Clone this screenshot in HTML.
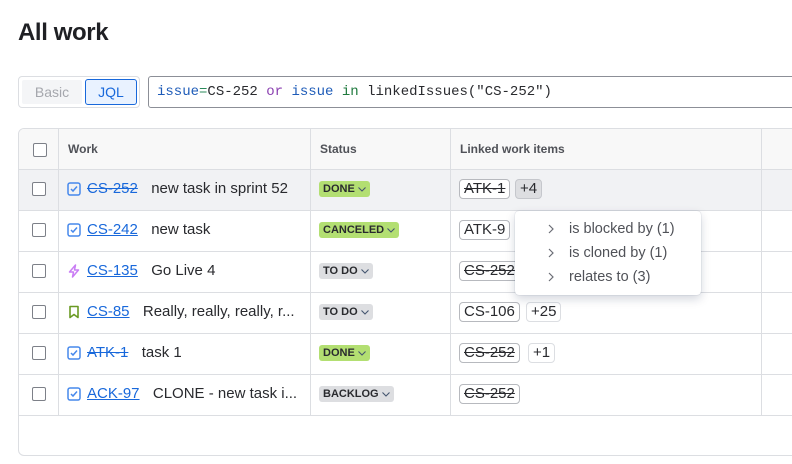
<!DOCTYPE html>
<html><head><style>
*{box-sizing:border-box;margin:0;padding:0}
body{width:792px;height:464px;overflow:hidden;background:#fff;font-family:"Liberation Sans",sans-serif;color:#292a2e;position:relative}
.abs{position:absolute}
h1{position:absolute;left:18px;top:19px;font-size:24px;font-weight:bold;color:#1f2024;letter-spacing:-0.4px}
.tog{left:18px;top:76px;width:122px;height:32px;border:1px solid #dcdee2;border-radius:4px;background:#fff}
.basic{left:22px;top:80px;width:60px;height:24px;background:#f4f5f7;color:#a5a7ad;font-size:14px;line-height:24px;text-align:center;border-radius:2px}
.jql{left:85px;top:79px;width:52px;height:26px;background:#e9f2ff;border:1px solid #1868db;color:#1868db;font-size:14px;line-height:24px;text-align:center;border-radius:3px}
.q{left:148px;top:76px;width:660px;height:32px;border:1px solid #8c8f97;border-radius:3px;font-family:"Liberation Mono",monospace;font-size:14px;line-height:30px;padding-left:8px;color:#292a2e}
.kw{color:#1d5bb8}.op{color:#2a8a5a}.pu{color:#8a3fb0}.gr{color:#1f7a3e}
.tbl{left:18px;top:128px;width:800px;height:328px;border:1px solid #dcdee2;border-radius:6px;overflow:hidden}
.hdr{left:0;top:0;width:800px;height:41px;background:#f8f8f8;border-bottom:1px solid #dcdee2}
.vl{top:0;width:1px;background:#dcdee2;height:286px}
.row{left:0;width:800px;height:41px;border-bottom:1px solid #dcdee2}
.th{top:13px;font-size:12px;font-weight:bold;color:#505258}
.cb{width:14px;height:14px;border:1.5px solid #7d8088;border-radius:2px;background:#fff}
.lnk{font-size:15px;color:#1868db;text-decoration:underline}
.st{text-decoration:line-through;text-decoration-color:currentColor}
.sum{font-size:15px;color:#292a2e}
.pill{height:16px;border-radius:3px;font-size:11px;font-weight:bold;line-height:16px;padding:0 3px 0 4px;color:#292a2e;white-space:nowrap;display:flex;align-items:center;gap:2px}
.pill svg{display:block}
.g{background:#b3df72}.n{background:#dddee1}
.chip{height:20px;border:1px solid #b7b9be;border-radius:4px;font-size:15px;line-height:18px;padding:0 4px;color:#292a2e;background:#fff}
.plus{border-color:#dcdee2}
.pop{left:515px;top:211px;width:186px;height:84px;background:#fff;border-radius:4px;box-shadow:0 4px 10px rgba(9,30,66,.18),0 0 1px rgba(9,30,66,.3)}
.pi{left:54px;font-size:14.5px;color:#505258}
.ch{left:32px}
</style></head><body>
<h1>All work</h1>
<div class="abs tog"></div>
<div class="abs basic">Basic</div>
<div class="abs jql">JQL</div>
<div class="abs q"><span class="kw">issue</span><span class="op">=</span>CS-252 <span class="pu">or</span> <span class="kw">issue</span> <span class="gr">in</span> linkedIssues("CS-252")</div>

<div class="abs tbl">
 <div class="abs hdr"></div>
 <div class="abs row" style="top:41px;background:#f1f2f4"></div>
 <div class="abs row" style="top:82px"></div>
 <div class="abs row" style="top:123px"></div>
 <div class="abs row" style="top:164px"></div>
 <div class="abs row" style="top:205px"></div>
 <div class="abs row" style="top:246px"></div>
 <div class="abs vl" style="left:39px"></div>
 <div class="abs vl" style="left:291px"></div>
 <div class="abs vl" style="left:431px"></div>
 <div class="abs vl" style="left:742px"></div>
 <div class="abs cb" style="left:14px;top:14px"></div>
 <div class="abs th" style="left:49px">Work</div>
 <div class="abs th" style="left:301px">Status</div>
 <div class="abs th" style="left:441px">Linked work items</div>
</div>

<div class="abs cb" style="left:32px;top:182px"></div>
<div class="abs cb" style="left:32px;top:223px"></div>
<div class="abs cb" style="left:32px;top:264px"></div>
<div class="abs cb" style="left:32px;top:305px"></div>
<div class="abs cb" style="left:32px;top:346px"></div>
<div class="abs cb" style="left:32px;top:387px"></div>

<svg class="abs" style="left:67px;top:182px" width="14" height="14" viewBox="0 0 14 14"><rect x="1" y="1" width="12" height="12" rx="2" fill="none" stroke="#4688ec" stroke-width="1.5"/><path d="M4 7l2 2 4-4.5" fill="none" stroke="#4688ec" stroke-width="1.5"/></svg>
<svg class="abs" style="left:67px;top:223px" width="14" height="14" viewBox="0 0 14 14"><rect x="1" y="1" width="12" height="12" rx="2" fill="none" stroke="#4688ec" stroke-width="1.5"/><path d="M4 7l2 2 4-4.5" fill="none" stroke="#4688ec" stroke-width="1.5"/></svg>
<svg class="abs" style="left:67px;top:264px" width="14" height="14" viewBox="0 0 14 14"><path d="M8.5 1L2.5 8h4l-1 5 6-7h-4z" fill="none" stroke="#c97cf4" stroke-width="1.5" stroke-linejoin="round"/></svg>
<svg class="abs" style="left:67px;top:305px" width="14" height="14" viewBox="0 0 14 14"><path d="M3 1.5h8v11l-4-3-4 3z" fill="none" stroke="#6a9a23" stroke-width="1.6" stroke-linejoin="round"/></svg>
<svg class="abs" style="left:67px;top:346px" width="14" height="14" viewBox="0 0 14 14"><rect x="1" y="1" width="12" height="12" rx="2" fill="none" stroke="#4688ec" stroke-width="1.5"/><path d="M4 7l2 2 4-4.5" fill="none" stroke="#4688ec" stroke-width="1.5"/></svg>
<svg class="abs" style="left:67px;top:387px" width="14" height="14" viewBox="0 0 14 14"><rect x="1" y="1" width="12" height="12" rx="2" fill="none" stroke="#4688ec" stroke-width="1.5"/><path d="M4 7l2 2 4-4.5" fill="none" stroke="#4688ec" stroke-width="1.5"/></svg>

<div class="abs" style="left:87px;top:180px"><span class="lnk st">CS-252</span>&nbsp;&nbsp;&nbsp;<span class="sum">new task in sprint 52</span></div>
<div class="abs" style="left:87px;top:221px"><span class="lnk">CS-242</span>&nbsp;&nbsp;&nbsp;<span class="sum">new task</span></div>
<div class="abs" style="left:87px;top:262px"><span class="lnk">CS-135</span>&nbsp;&nbsp;&nbsp;<span class="sum">Go Live 4</span></div>
<div class="abs" style="left:87px;top:303px"><span class="lnk">CS-85</span>&nbsp;&nbsp;&nbsp;<span class="sum">Really, really, really, r...</span></div>
<div class="abs" style="left:87px;top:344px"><span class="lnk st">ATK-1</span>&nbsp;&nbsp;&nbsp;<span class="sum">task 1</span></div>
<div class="abs" style="left:87px;top:385px"><span class="lnk">ACK-97</span>&nbsp;&nbsp;&nbsp;<span class="sum">CLONE - new task i...</span></div>

<div class="abs pill g" style="left:319px;top:181px">DONE<svg width="10" height="8" viewBox="0 0 10 8"><path d="M1.5 2.5l3.5 3.5 3.5-3.5" fill="none" stroke="#44546f" stroke-width="1.1"/></svg></div>
<div class="abs pill g" style="left:319px;top:222px">CANCELED<svg width="10" height="8" viewBox="0 0 10 8"><path d="M1.5 2.5l3.5 3.5 3.5-3.5" fill="none" stroke="#44546f" stroke-width="1.1"/></svg></div>
<div class="abs pill n" style="left:319px;top:263px">TO DO<svg width="10" height="8" viewBox="0 0 10 8"><path d="M1.5 2.5l3.5 3.5 3.5-3.5" fill="none" stroke="#44546f" stroke-width="1.1"/></svg></div>
<div class="abs pill n" style="left:319px;top:304px">TO DO<svg width="10" height="8" viewBox="0 0 10 8"><path d="M1.5 2.5l3.5 3.5 3.5-3.5" fill="none" stroke="#44546f" stroke-width="1.1"/></svg></div>
<div class="abs pill g" style="left:319px;top:345px">DONE<svg width="10" height="8" viewBox="0 0 10 8"><path d="M1.5 2.5l3.5 3.5 3.5-3.5" fill="none" stroke="#44546f" stroke-width="1.1"/></svg></div>
<div class="abs pill n" style="left:319px;top:386px">BACKLOG<svg width="10" height="8" viewBox="0 0 10 8"><path d="M1.5 2.5l3.5 3.5 3.5-3.5" fill="none" stroke="#44546f" stroke-width="1.1"/></svg></div>

<div class="abs chip st" style="left:459px;top:179px">ATK-1</div>
<div class="abs chip plus" style="left:515px;top:179px;background:#dddee1;border-color:#c5c7cc">+4</div>
<div class="abs chip" style="left:459px;top:220px">ATK-9</div>
<div class="abs chip st" style="left:459px;top:261px">CS-252</div>
<div class="abs chip" style="left:459px;top:302px">CS-106</div>
<div class="abs chip plus" style="left:526px;top:302px">+25</div>
<div class="abs chip st" style="left:459px;top:343px">CS-252</div>
<div class="abs chip plus" style="left:528px;top:343px">+1</div>
<div class="abs chip st" style="left:459px;top:384px">CS-252</div>

<div class="abs pop">
 <svg class="abs ch" style="top:12px" width="8" height="12" viewBox="0 0 8 12"><path d="M2 2l4 4-4 4" fill="none" stroke="#6b6e76" stroke-width="1.2"/></svg><div class="abs pi" style="top:10px">is blocked by (1)</div>
 <svg class="abs ch" style="top:36px" width="8" height="12" viewBox="0 0 8 12"><path d="M2 2l4 4-4 4" fill="none" stroke="#6b6e76" stroke-width="1.2"/></svg><div class="abs pi" style="top:34px">is cloned by (1)</div>
 <svg class="abs ch" style="top:60px" width="8" height="12" viewBox="0 0 8 12"><path d="M2 2l4 4-4 4" fill="none" stroke="#6b6e76" stroke-width="1.2"/></svg><div class="abs pi" style="top:58px">relates to (3)</div>
</div>
</body></html>
